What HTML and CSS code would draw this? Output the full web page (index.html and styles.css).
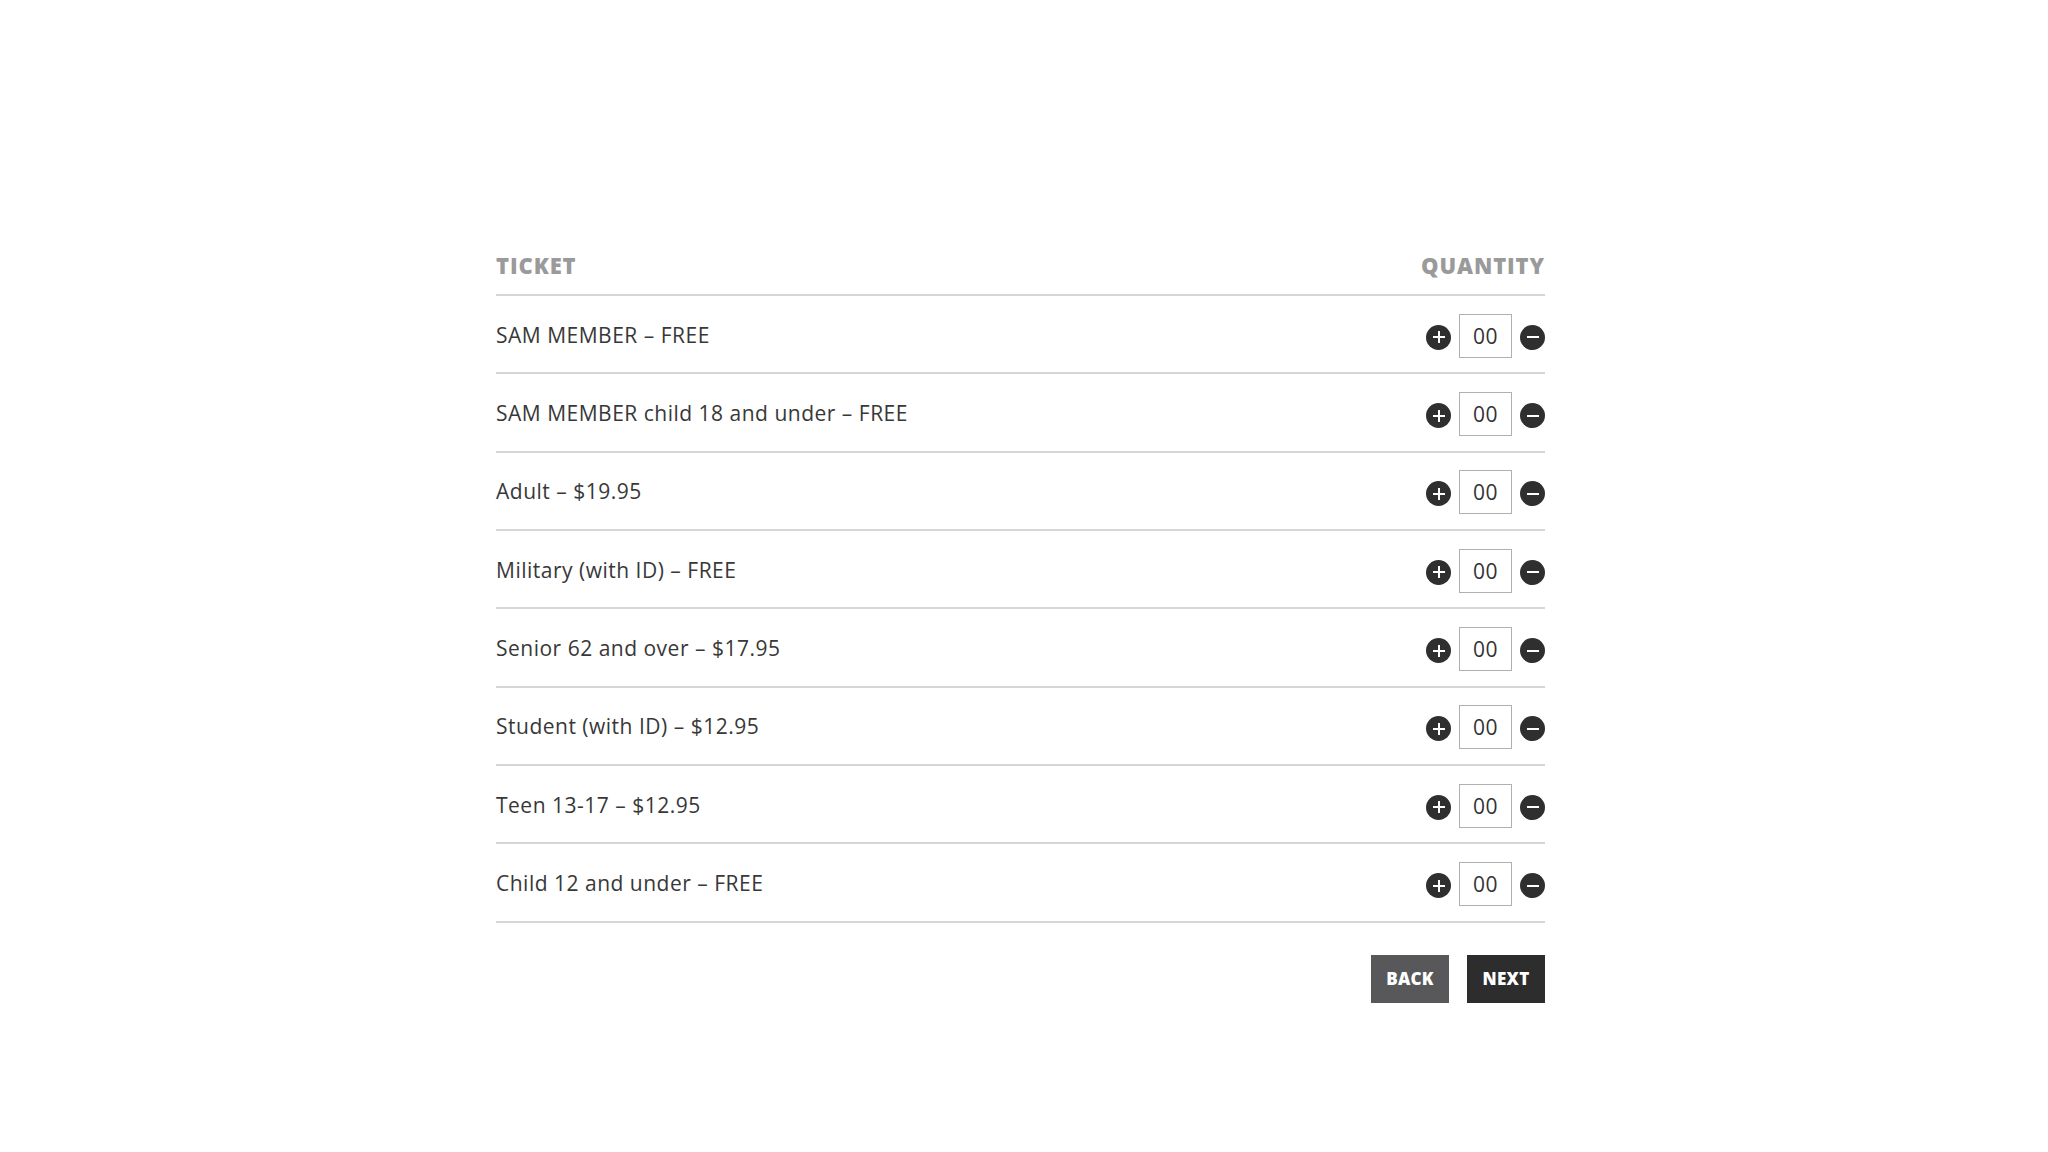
FILE: index.html
```html
<!DOCTYPE html>
<html>
<head>
<meta charset="utf-8">
<link rel="stylesheet" href="styles.css">
</head>
<body>
<div class="page">
  <div class="tickets">
    <div class="head">
      <span class="head-label">TICKET</span>
      <span class="head-label">QUANTITY</span>
    </div>
    <div class="row"><span class="name">SAM MEMBER – FREE</span><div class="qty"><span class="btn-circle plus"></span><span class="box">00</span><span class="btn-circle minus"></span></div></div>
    <div class="row"><span class="name">SAM MEMBER child 18 and under – FREE</span><div class="qty"><span class="btn-circle plus"></span><span class="box">00</span><span class="btn-circle minus"></span></div></div>
    <div class="row"><span class="name">Adult – $19.95</span><div class="qty"><span class="btn-circle plus"></span><span class="box">00</span><span class="btn-circle minus"></span></div></div>
    <div class="row"><span class="name">Military (with ID) – FREE</span><div class="qty"><span class="btn-circle plus"></span><span class="box">00</span><span class="btn-circle minus"></span></div></div>
    <div class="row"><span class="name">Senior 62 and over – $17.95</span><div class="qty"><span class="btn-circle plus"></span><span class="box">00</span><span class="btn-circle minus"></span></div></div>
    <div class="row"><span class="name">Student (with ID) – $12.95</span><div class="qty"><span class="btn-circle plus"></span><span class="box">00</span><span class="btn-circle minus"></span></div></div>
    <div class="row"><span class="name">Teen 13-17 – $12.95</span><div class="qty"><span class="btn-circle plus"></span><span class="box">00</span><span class="btn-circle minus"></span></div></div>
    <div class="row"><span class="name">Child 12 and under – FREE</span><div class="qty"><span class="btn-circle plus"></span><span class="box">00</span><span class="btn-circle minus"></span></div></div>
    <div class="actions">
      <button class="action back">BACK</button>
      <button class="action next">NEXT</button>
    </div>
  </div>
</div>
</body>
</html>
```
FILE: styles.css
```css
html, body {
  margin: 0;
  padding: 0;
  background: #ffffff;
}
.page {
  padding: 250px 0 0 496px;
  font-family: "Open Sans", "Liberation Sans", sans-serif;
  color: #333333;
}
.tickets {
  width: 1049px;
}
.head {
  box-sizing: border-box;
  display: flex;
  justify-content: space-between;
  align-items: center;
  height: 46px;
  padding-bottom: 14px;
  border-bottom: 2px solid #d6d6d6;
}
.head-label {
  font-size: 22px;
  font-weight: 800;
  color: #9a9a9a;
  letter-spacing: 0.9px;
}
.row {
  display: flex;
  justify-content: space-between;
  align-items: center;
  height: 76.35px;
  border-bottom: 2px solid #d6d6d6;
}
.name {
  font-size: 21px;
  color: #383838;
  letter-spacing: 0.5px;
  margin-top: 1px;
}
.qty {
  display: flex;
  align-items: center;
  gap: 8px;
  margin-top: 3px;
}
.box {
  box-sizing: border-box;
  width: 53px;
  height: 44px;
  border: 1px solid #b0b0b0;
  display: flex;
  align-items: center;
  justify-content: center;
  font-size: 21px;
  letter-spacing: 0.5px;
  color: #333;
}
.btn-circle {
  position: relative;
  width: 25px;
  height: 25px;
  border-radius: 50%;
  background: #2f2f2f;
  margin-top: 3px;
}
.btn-circle::before,
.btn-circle::after {
  content: "";
  position: absolute;
  background: #ffffff;
  left: 50%;
  top: 50%;
}
.btn-circle::before {
  width: 12px;
  height: 2px;
  margin: -1px 0 0 -6px;
}
.plus::after {
  width: 2px;
  height: 12px;
  margin: -6px 0 0 -1px;
}
.minus::after {
  display: none;
}
.actions {
  display: flex;
  justify-content: flex-end;
  gap: 18px;
  margin-top: 32px;
}
.action {
  border: none;
  height: 48px;
  width: 78px;
  color: #ffffff;
  font-family: "Open Sans", "Liberation Sans", sans-serif;
  font-size: 17px;
  font-weight: 800;
  letter-spacing: 0.3px;
  padding: 0;
}
.back {
  background: #58585a;
}
.next {
  background: #2d2d2d;
}
```
